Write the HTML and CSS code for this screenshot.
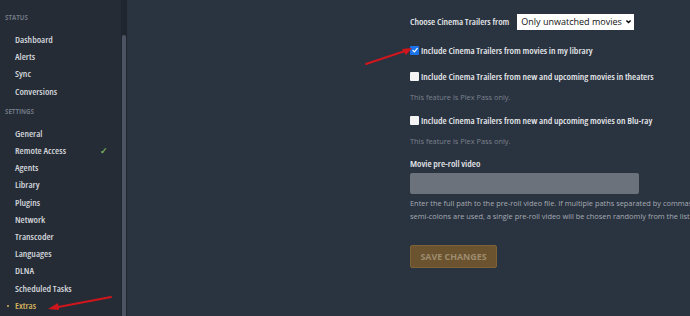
FILE: index.html
```html
<!DOCTYPE html>
<html>
<head>
<meta charset="utf-8">
<link rel="stylesheet" href="styles.css">
</head>
<body>
<div class="app">
  <aside class="sidebar">
    <div class="nav">
      <div class="section-title">STATUS</div>
      <a class="item">Dashboard</a>
      <a class="item">Alerts</a>
      <a class="item">Sync</a>
      <a class="item">Conversions</a>
      <div class="section-title">SETTINGS</div>
      <a class="item">General</a>
      <a class="item">Remote Access<span class="check">&#10003;</span></a>
      <a class="item">Agents</a>
      <a class="item">Library</a>
      <a class="item">Plugins</a>
      <a class="item">Network</a>
      <a class="item">Transcoder</a>
      <a class="item">Languages</a>
      <a class="item">DLNA</a>
      <a class="item">Scheduled Tasks</a>
      <a class="item active"><span class="dot"></span>Extras</a>
    </div>
    <div class="scrollbar"><div class="thumb"></div></div>
  </aside>
  <main class="main">
    <div class="form">
      <div class="row-select">
        <span class="label">Choose Cinema Trailers from</span>
        <span class="select">Only unwatched movies<svg class="chev" viewBox="0 0 10 10" width="7" height="7"><path d="M2 3.5 L5 6.5 L8 3.5" fill="none" stroke="#000" stroke-width="2"/></svg></span>
      </div>
      <label class="cb-row"><span class="cb checked"><svg viewBox="0 0 10 10" width="8" height="8"><path d="M2 5.2 L4.2 7.3 L8.2 2.6" fill="none" stroke="#fff" stroke-width="1.6"/></svg></span>Include Cinema Trailers from movies in my library</label>
      <label class="cb-row gap-top"><span class="cb"></span>Include Cinema Trailers from new and upcoming movies in theaters</label>
      <div class="note">This feature is Plex Pass only.</div>
      <label class="cb-row"><span class="cb"></span>Include Cinema Trailers from new and upcoming movies on Blu-ray</label>
      <div class="note">This feature is Plex Pass only.</div>
      <div class="field-label">Movie pre-roll video</div>
      <div class="input"></div>
      <div class="help">Enter the full path to the pre-roll video file. If multiple paths separated by commas or<br>semi-colons are used, a single pre-roll video will be chosen randomly from the list.</div>
      <button class="save">SAVE CHANGES</button>
    </div>
  </main>
</div>
<svg class="arrow arrow-1" width="50" height="24" viewBox="0 0 50 24"><path d="M2 20 L44 6" stroke="#d0161c" stroke-width="2" stroke-linecap="round"/><path d="M48 4 L38 5 L42 11 Z" fill="#d0161c"/></svg>
<svg class="arrow arrow-2" width="70" height="20" viewBox="0 0 70 20"><path d="M8 15 L66 4" stroke="#d0161c" stroke-width="2" stroke-linecap="round"/><path d="M3 16 L13 10 L14 17 Z" fill="#d0161c"/></svg>
</body>
</html>
```

FILE: styles.css
```css
* { box-sizing: border-box; }
html, body {
  margin: 0;
  padding: 0;
  width: 690px;
  height: 316px;
  overflow: hidden;
  background: #2a3340;
  font-family: "Open Sans", "Lato", sans-serif;
}
.app {
  display: flex;
  height: 316px;
}
.sidebar {
  width: 127px;
  flex: none;
  display: flex;
  background: #252c36;
}
.nav {
  flex: 1;
  padding-top: 12px;
}
.section-title {
  font-size: 6.2px;
  font-weight: 700;
  color: #6f7783;
  padding-left: 5px;
  height: 17px;
  line-height: 12px;
}
.section-title + .item { margin-top: 2px; }
.item {
  display: flex;
  align-items: center;
  position: relative;
  height: 17.2px;
  padding-left: 15px;
  font-size: 9.5px;
  font-weight: 600;
  font-stretch: 87.5%;
  color: #d3d6db;
}
.item:nth-of-type(4) { margin-bottom: 6px; }
.check {
  margin-left: auto;
  margin-right: 13px;
  color: #76b05e;
  font-size: 9px;
  font-stretch: 100%;
}
.item.active { color: #d6b35d; }
.dot {
  position: absolute;
  left: 7px;
  top: 8px;
  width: 2px;
  height: 2px;
  border-radius: 50%;
  background: #d6b35d;
}
.scrollbar {
  width: 6px;
  background: #20262f;
  padding-top: 35px;
  display: flex;
  justify-content: center;
}
.thumb {
  width: 4px;
  height: 100%;
  background: #4c5463;
  border-radius: 2px 2px 0 0;
}
.main {
  flex: 1;
  padding-left: 283px;
  padding-top: 13px;
  overflow: hidden;
  white-space: nowrap;
}
.form {
  font-size: 9.5px;
  color: #e6e8eb;
  font-weight: 600;
  font-stretch: 87.5%;
}
.row-select {
  display: flex;
  align-items: center;
  gap: 8px;
  height: 17px;
}
.select {
  display: inline-flex;
  align-items: center;
  gap: 3px;
  background: #fff;
  color: #111;
  font-weight: 400;
  font-stretch: 100%;
  font-size: 9px;
  height: 16px;
  padding: 0 2px 0 4px;
}
.cb-row {
  display: flex;
  align-items: center;
  gap: 2px;
  margin-top: 15px;
  height: 10px;
}
.gap-top { margin-top: 16px; }
.cb {
  flex: none;
  width: 9px;
  height: 9px;
  background: #f4f4f4;
  border-radius: 1px;
  display: flex;
  align-items: center;
  justify-content: center;
}
.cb.checked { background: #1a73e8; }
.note {
  color: #7b828d;
  font-weight: 400;
  font-stretch: 100%;
  font-size: 7.4px;
  margin-top: 11px;
  height: 10px;
  line-height: 10px;
}
.note + .cb-row { margin-top: 13px; }
.field-label {
  margin-top: 12px;
  height: 12px;
  line-height: 12px;
}
.input {
  margin-top: 3px;
  width: 229px;
  height: 21px;
  background: #6b727c;
  border-radius: 2px;
}
.help {
  margin-top: 3px;
  color: #a6abb3;
  font-weight: 400;
  font-stretch: 100%;
  font-size: 7.4px;
  line-height: 13px;
}
.save {
  margin-top: 22px;
  width: 87px;
  height: 23px;
  background: #6a532e;
  border: 1px solid #7c6236;
  border-radius: 2px;
  color: #9e8c70;
  font-family: inherit;
  font-stretch: 100%;
  font-weight: 700;
  font-size: 8.9px;
  padding: 0;
}
.arrow { position: absolute; }
.arrow-1 { left: 364px; top: 44px; }
.arrow-2 { left: 45px; top: 293px; }
```
